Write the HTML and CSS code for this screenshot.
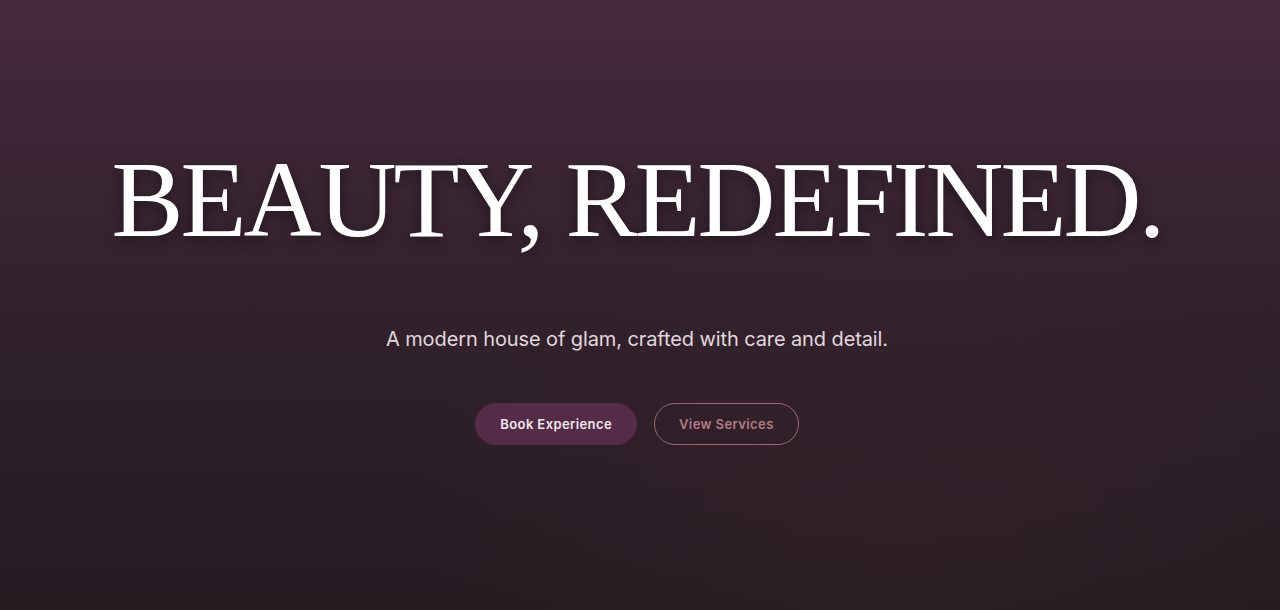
FILE: index.html
```html
<!DOCTYPE html>
<html lang="en">
<head>
    <meta charset="UTF-8">
    <meta name="viewport" content="width=device-width, initial-scale=1.0">
    <title>Beauty, Redefined</title>
    <link rel="stylesheet" href="styles.css">
</head>
<body>

<section class="hero">
    <h1 class="hero-title">BEAUTY, REDEFINED.</h1>
    <p class="hero-tagline">A modern house of glam, crafted with care and detail.</p>
    <div class="hero-actions">
        <a href="#book" class="btn btn-primary">Book Experience</a>
        <a href="#services" class="btn btn-outline">View Services</a>
    </div>
</section>

</body>
</html>
```

FILE: styles.css
```css
html, body {
    margin: 0;
    padding: 0;
}
body {
    font-family: Inter, "Noto Sans", sans-serif;
    background: #271d23;
}
.hero {
    height: 610px;
    box-sizing: border-box;
    padding-right: 6px;
    display: flex;
    flex-direction: column;
    align-items: center;
    background:
        radial-gradient(ellipse 700px 400px at 900px 500px, rgba(70, 40, 50, 0.25), rgba(0, 0, 0, 0) 70%),
        linear-gradient(180deg, #45293b 0%, #3a2533 30%, #2e2029 60%, #261c22 100%);
}
.hero-title {
    margin: 146px 0 0;
    font-family: "Liberation Serif", "DejaVu Serif", serif;
    font-weight: 400;
    font-size: 108px;
    line-height: 108px;
    letter-spacing: -3px;
    color: #fff;
    text-shadow: 0 4px 14px rgba(0, 0, 0, 0.45);
}
.hero-tagline {
    margin: 71px 0 0;
    font-size: 20px;
    line-height: 28px;
    letter-spacing: -0.1px;
    color: #e2d8de;
}
.hero-actions {
    display: flex;
    gap: 17px;
    margin-top: 50px;
}
.btn {
    display: inline-flex;
    align-items: center;
    justify-content: center;
    height: 42px;
    box-sizing: border-box;
    padding: 0 25px;
    border-radius: 21px;
    font-size: 13px;
    font-weight: 600;
    letter-spacing: 0.4px;
    text-decoration: none;
}
.btn-primary {
    background: #552c47;
    color: #f1e8ec;
}
.btn-outline {
    padding: 0 24px;
    border: 1px solid #9e6572;
    color: #b67a86;
}
```
